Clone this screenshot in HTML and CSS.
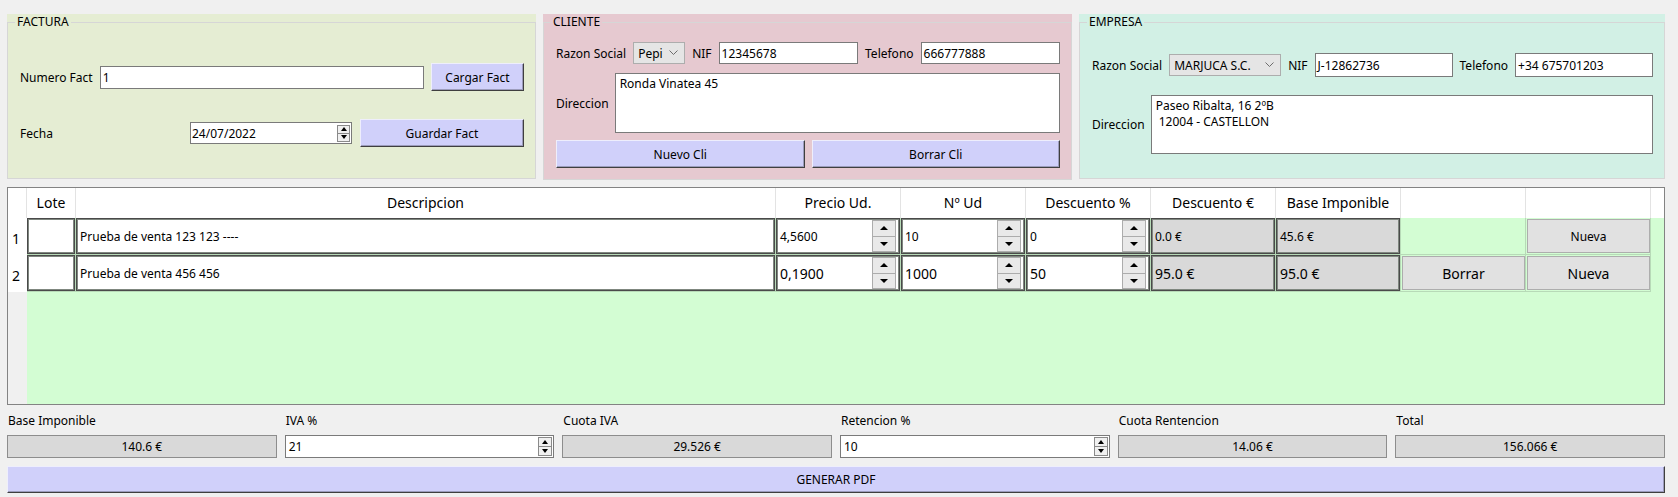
FILE: index.html
```html
<!DOCTYPE html>
<html lang="es">
<head>
<meta charset="utf-8">
<title>Factura</title>
<link rel="stylesheet" href="styles.css">
</head>
<body>
<div class="app">
  <div class="top">
    <div class="group g-factura">
      <fieldset class="frame">
        <legend>FACTURA</legend>
        <div class="f-row1">
          <span class="lbl">Numero Fact</span>
          <div class="field grow">1</div>
          <button class="btn b-cargar">Cargar Fact</button>
        </div>
        <div class="f-row2">
          <span class="lbl grow">Fecha</span>
          <div class="field date">
            <span class="grow">24/07/2022</span>
            <span class="arrows a-small"><i class="up"></i><i class="down"></i></span>
          </div>
          <button class="btn b-guardar">Guardar Fact</button>
        </div>
      </fieldset>
    </div>

    <div class="group g-cliente">
      <fieldset class="frame">
        <legend>CLIENTE</legend>
        <div class="c-row1">
          <span class="lbl">Razon Social</span>
          <div class="combo c-pepi"><span class="grow clip">Pepi</span><svg class="chev" width="9" height="6" viewBox="0 0 9 6"><polyline points="0.5,0.5 4.5,4.5 8.5,0.5" fill="none" stroke="#6d6d6d" stroke-width="1"/></svg></div>
          <span class="lbl">NIF</span>
          <div class="field grow">12345678</div>
          <span class="lbl">Telefono</span>
          <div class="field grow">666777888</div>
        </div>
        <div class="c-row2">
          <span class="lbl">Direccion</span>
          <div class="area grow">Ronda Vinatea 45</div>
        </div>
        <div class="c-row3">
          <button class="btn grow">Nuevo Cli</button>
          <button class="btn grow">Borrar Cli</button>
        </div>
      </fieldset>
    </div>

    <div class="group g-empresa">
      <fieldset class="frame">
        <legend>EMPRESA</legend>
        <div class="e-row1">
          <span class="lbl">Razon Social</span>
          <div class="combo c-marj"><span class="grow">MARJUCA S.C.</span><svg class="chev" width="9" height="6" viewBox="0 0 9 6"><polyline points="0.5,0.5 4.5,4.5 8.5,0.5" fill="none" stroke="#6d6d6d" stroke-width="1"/></svg></div>
          <span class="lbl">NIF</span>
          <div class="field grow e-field">J-12862736</div>
          <span class="lbl">Telefono</span>
          <div class="field grow e-field">+34 675701203</div>
        </div>
        <div class="e-row2">
          <span class="lbl">Direccion</span>
          <div class="area grow e-area">Paseo Ribalta, 16 2ºB<br>&nbsp;12004 - CASTELLON</div>
        </div>
      </fieldset>
    </div>
  </div>

  <div class="table">
    <div class="th corner"></div>
    <div class="th">Lote</div>
    <div class="th">Descripcion</div>
    <div class="th">Precio Ud.</div>
    <div class="th">Nº Ud</div>
    <div class="th">Descuento %</div>
    <div class="th">Descuento €</div>
    <div class="th">Base Imponible</div>
    <div class="th"></div>
    <div class="th"></div>
    <div class="th filler"></div>

    <div class="rownum">1</div>
    <div class="td"><div class="ed"></div></div>
    <div class="td"><div class="ed">Prueba de venta 123 123 ----</div></div>
    <div class="td"><div class="ed"><span class="grow">4,5600</span><span class="arrows a-big"><i class="up"></i><i class="down"></i></span></div></div>
    <div class="td"><div class="ed"><span class="grow">10</span><span class="arrows a-big"><i class="up"></i><i class="down"></i></span></div></div>
    <div class="td"><div class="ed"><span class="grow">0</span><span class="arrows a-big"><i class="up"></i><i class="down"></i></span></div></div>
    <div class="td"><div class="ed ro">0.0 €</div></div>
    <div class="td"><div class="ed ro">45.6 €</div></div>
    <div class="td"></div>
    <div class="td"><button class="tbtn">Nueva</button></div>
    <div class="tfill"></div>

    <div class="rownum">2</div>
    <div class="td"><div class="ed"></div></div>
    <div class="td"><div class="ed">Prueba de venta 456 456</div></div>
    <div class="td"><div class="ed big"><span class="grow">0,1900</span><span class="arrows a-big"><i class="up"></i><i class="down"></i></span></div></div>
    <div class="td"><div class="ed big"><span class="grow">1000</span><span class="arrows a-big"><i class="up"></i><i class="down"></i></span></div></div>
    <div class="td"><div class="ed big"><span class="grow">50</span><span class="arrows a-big"><i class="up"></i><i class="down"></i></span></div></div>
    <div class="td"><div class="ed ro big">95.0 €</div></div>
    <div class="td"><div class="ed ro big">95.0 €</div></div>
    <div class="td"><button class="tbtn big">Borrar</button></div>
    <div class="td"><button class="tbtn big">Nueva</button></div>
    <div class="tfill"></div>

    <div class="numfill"></div>
    <div class="bodyfill"></div>
  </div>

  <div class="summary">
    <span class="s-lbl">Base Imponible</span>
    <span class="s-lbl">IVA %</span>
    <span class="s-lbl">Cuota IVA</span>
    <span class="s-lbl">Retencion %</span>
    <span class="s-lbl">Cuota Rentencion</span>
    <span class="s-lbl">Total</span>

    <div class="s-box">140.6 €</div>
    <div class="s-spin"><span class="grow">21</span><span class="arrows a-sum"><i class="up"></i><i class="down"></i></span></div>
    <div class="s-box">29.526 €</div>
    <div class="s-spin"><span class="grow">10</span><span class="arrows a-sum"><i class="up"></i><i class="down"></i></span></div>
    <div class="s-box">14.06 €</div>
    <div class="s-box">156.066 €</div>
  </div>

  <button class="btn pdf">GENERAR PDF</button>
</div>
</body>
</html>
```

FILE: styles.css
```css
* { box-sizing: border-box; }

html, body { margin: 0; padding: 0; }

body {
  width: 1678px;
  height: 497px;
  overflow: hidden;
  background: #f0f0f0;
  color: #000;
  font-family: "Noto Sans", "Open Sans", sans-serif;
  font-size: 12px;
}

.app { padding: 14px 13px 0 7px; }

.grow { flex: 1 1 0; min-width: 0; }
.clip { overflow: hidden; white-space: nowrap; }

/* ---------- top group boxes ---------- */
.top {
  display: grid;
  grid-template-columns: 529px 529px 1fr;
  column-gap: 7px;
  height: 166px;
}

.group { height: 100%; }
.g-factura { background: #e5edd3; height: 165px; }
.g-cliente { background: #e6c9d0; }
.g-empresa { background: #d2f0e5; height: 165px; }

.frame {
  margin: 0;
  height: 100%;
  min-width: 0;
  border: 1px solid #d6d6d6;
  padding: 0 11px 0 12px;
}

.frame legend {
  padding: 0 2px;
  margin-left: -5px;
  line-height: 16px;
  font-size: 12px;
}

.lbl { white-space: nowrap; }

.field {
  display: flex;
  align-items: center;
  height: 23px;
  background: #fff;
  border: 1px solid #7a7a7a;
  padding: 0 2px;
  white-space: nowrap;
  overflow: hidden;
}

.area {
  background: #fff;
  border: 1px solid #7a7a7a;
  padding: 2px 4px;
  line-height: 16px;
}

.combo {
  display: flex;
  align-items: center;
  height: 22px;
  background: #e5e5e5;
  border: 1px solid #adadad;
  padding: 0 6px 0 4px;
  gap: 4px;
  white-space: nowrap;
}
.chev { flex: none; }
.c-pepi { width: 52px; }
.c-marj { width: 112px; }

.btn {
  font: inherit;
  color: #000;
  background: #d0d0fa;
  border: 1px solid;
  border-color: #eeeefc #3f3f3f #3f3f3f #eeeefc;
  box-shadow: inset -1px -1px 0 #9c9cbc;
  height: 28px;
  padding: 0;
}

/* factura */
.f-row1 {
  display: flex;
  align-items: center;
  gap: 7px;
  height: 28px;
  margin-top: 33px;
}
.f-row2 {
  display: flex;
  align-items: center;
  gap: 8px;
  height: 28px;
  margin-top: 28px;
}
.b-cargar { width: 93px; }
.b-guardar { width: 164px; }
.date { width: 162px; height: 22px; padding: 0 1px 0 1px; }

/* cliente */
.c-row1 {
  display: flex;
  align-items: center;
  gap: 7px;
  height: 22px;
  margin-top: 12px;
}
.c-row1 .field { height: 22px; }
.c-row2 {
  display: flex;
  align-items: center;
  gap: 6px;
  height: 60px;
  margin-top: 9px;
}
.c-row2 .area { height: 60px; }
.c-row3 {
  display: flex;
  gap: 7px;
  height: 28px;
  margin-top: 7px;
}

/* empresa */
.e-row1 {
  display: flex;
  align-items: center;
  gap: 7px;
  height: 24px;
  margin-top: 23px;
}
.e-field { height: 24px; }
.e-row2 {
  display: flex;
  align-items: center;
  gap: 6px;
  height: 59px;
  margin-top: 18px;
}
.e-area { height: 59px; }

/* ---------- spin arrows ---------- */
.arrows {
  flex: none;
  display: flex;
  flex-direction: column;
}
.arrows i {
  flex: 1;
  display: flex;
  align-items: center;
  justify-content: center;
  background: #e6e6e6;
  border: 1px solid #acacac;
}
.arrows i::before {
  content: "";
  width: 0;
  height: 0;
  border-left: 4px solid transparent;
  border-right: 4px solid transparent;
}
.arrows .up::before { border-bottom: 4px solid #000; }
.arrows .down::before { border-top: 4px solid #000; }
.arrows .down { border-top: none; }

.a-small { width: 13px; height: 17px; }
.a-small i { background: #f0f0f0; border-color: #8a8a8a; }
.a-small i::before { border-left-width: 3px; border-right-width: 3px; }

.a-big { width: 24px; height: 32px; margin-right: 1px; }
.a-big i { background: #e9e9e9; }

.a-sum { width: 14px; height: 19px; margin-right: 1px; }
.a-sum i { background: #f0f0f0; border-color: #8a8a8a; }
.a-sum i::before { border-left-width: 3px; border-right-width: 3px; }

/* ---------- table ---------- */
.table {
  margin-top: 7px;
  height: 218px;
  border: 1px solid #838383;
  background: #d3fdd3;
  display: grid;
  grid-template-columns: 19px 49px 700px repeat(7, 125px) 1fr;
  grid-template-rows: 30px 37px 37px 1fr;
}

.th {
  background: #fff;
  border-right: 1px solid #e3e3e3;
  display: flex;
  align-items: center;
  justify-content: center;
  font-size: 14px;
  padding-bottom: 1px;
}
.th.filler { border-right: none; }

.rownum {
  background: #fff;
  font-size: 14px;
  display: flex;
  align-items: center;
  padding-left: 4px;
  padding-top: 3px;
}

.td {
  display: flex;
  border-right: 1px solid #b7dab7;
  border-bottom: 1px solid #b7dab7;
}

.ed {
  flex: 1;
  min-width: 0;
  display: flex;
  align-items: center;
  background: #fff;
  border: 1px solid #4a4a4a;
  box-shadow: inset 0 0 0 1px #7f877f;
  padding: 0 2px 0 3px;
  white-space: nowrap;
  overflow: hidden;
}
.ed.ro { background: #d9d9d9; }
.ed.big { font-size: 14px; }

.tbtn {
  flex: 1;
  margin: 1px 0 1px 1px;
  font: inherit;
  color: #000;
  background: #e1e1e1;
  border: 1px solid #adadad;
  padding: 0;
}
.tbtn.big { font-size: 14px; }

.tfill { background: #d3fdd3; }
.numfill { background: #f0f0f0; }
.bodyfill { grid-column: 2 / -1; background: #d3fdd3; }

/* ---------- summary ---------- */
.summary {
  display: grid;
  grid-template-columns: repeat(6, 1fr);
  column-gap: 8px;
  row-gap: 6px;
  margin-top: 8px;
}
.s-lbl {
  height: 16px;
  line-height: 16px;
  padding-left: 1px;
  white-space: nowrap;
}
.s-box {
  height: 23px;
  background: #d9d9d9;
  border: 1px solid #8d8d8d;
  display: flex;
  align-items: center;
  justify-content: center;
}
.s-spin {
  height: 23px;
  background: #fff;
  border: 1px solid #7a7a7a;
  display: flex;
  align-items: center;
  padding-left: 3px;
}

.pdf {
  display: block;
  width: 100%;
  height: 27px;
  margin-top: 8px;
}
```
